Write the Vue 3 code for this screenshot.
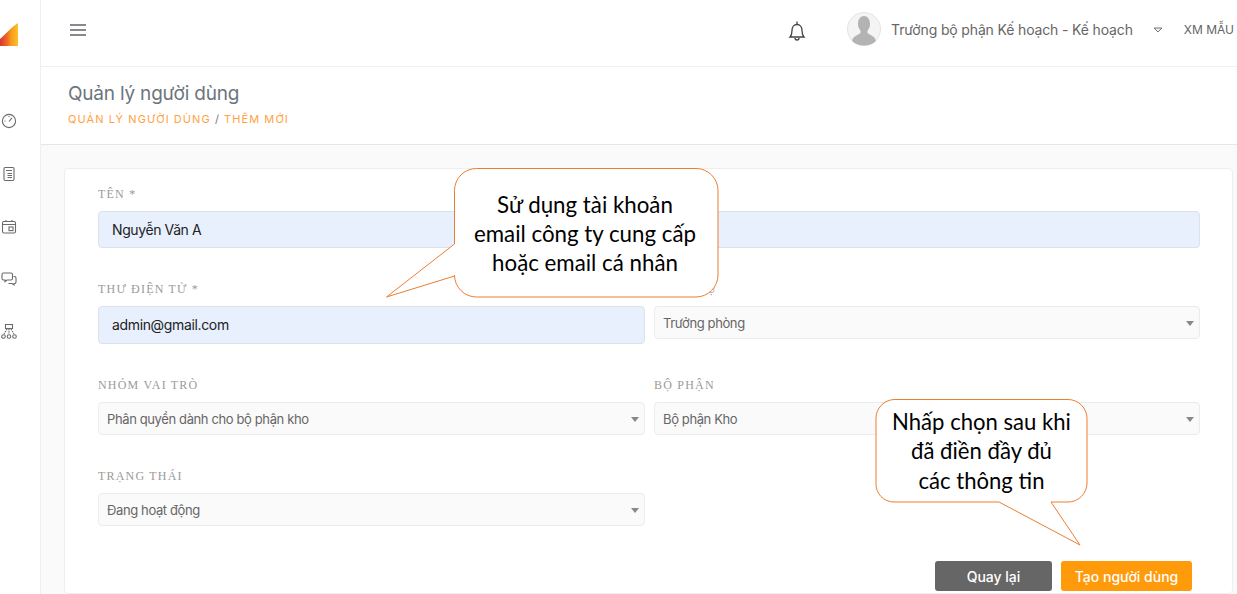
<script setup>
const navIcons = ['gauge', 'doc', 'cal', 'chat', 'tree']
</script>

<template>
  <div class="app">
    <aside class="sidebar">
      <svg class="logo" width="18" height="24" viewBox="0 0 18 24">
        <defs>
          <linearGradient id="logo-fill" x1="0" y1="0" x2="1" y2="0">
            <stop offset="0" stop-color="#d9352f" />
            <stop offset="0.4" stop-color="#ee6a26" />
            <stop offset="0.62" stop-color="#f99b1c" />
            <stop offset="1" stop-color="#fcc02c" />
          </linearGradient>
        </defs>
        <path d="M0 23 V16 C4 13 9 6 18 0 V23Z" fill="url(#logo-fill)" />
      </svg>
      <nav class="nav">
        <svg v-for="n in navIcons" :key="n" width="16" height="16" viewBox="0 0 16 16" fill="none" stroke="#6b6b6b" stroke-width="1.1">
          <template v-if="n === 'gauge'">
            <circle cx="8" cy="8" r="6.6" />
            <path d="M8 8.5 L11 4.8 M3.5 8h1M8 3v1" />
          </template>
          <template v-else-if="n === 'doc'">
            <rect x="3" y="1.500" width="10" height="13" rx="1.2" />
            <path d="M5 4.500h6M6.500 7.500h4.500M6.500 9.500h4.500M6.500 11.500h4.500" />
          </template>
          <template v-else-if="n === 'cal'">
            <rect x="1.5" y="2.5" width="13" height="11.5" rx="1.4" />
            <path d="M1.5 5.5h13M5 1v2M11 1v2" />
            <rect x="8" y="8" width="4" height="3.6" />
          </template>
          <template v-else-if="n === 'chat'">
            <path d="M2.5 2h7.500a1.500 1.500 0 0 1 1.500 1.500v4a1.500 1.500 0 0 1-1.500 1.500H6l-2 1.600V9H2.500A1.500 1.500 0 0 1 1 7.500v-4A1.500 1.500 0 0 1 2.500 2Z" />
            <path d="M12.500 5.500h1a1.500 1.500 0 0 1 1.500 1.500v4a1.500 1.500 0 0 1-1.500 1.500H13v1.500l-2-1.500H7.500" />
          </template>
          <template v-else>
            <rect x="4.500" y="0.500" width="7" height="4" />
            <path d="M8 5v5M6 5L3 10M10 5l3 5" stroke-dasharray="1.500 0.800" />
            <circle cx="2.500" cy="12.500" r="1.800" />
            <circle cx="8" cy="12.500" r="1.800" />
            <circle cx="13.500" cy="12.500" r="1.800" />
          </template>
        </svg>
      </nav>
    </aside>

    <main class="main">
      <header class="topbar">
        <svg class="menu" width="16" height="12" viewBox="0 0 16 12" stroke="#5f6368" stroke-width="1.600">
          <path d="M0 1h16M0 6h16M0 11h16" />
        </svg>
        <svg class="bell" width="18" height="22" viewBox="0 0 18 22" fill="none" stroke="#444" stroke-width="1.300">
          <path d="M2 17c1.500-1.500 2-3 2-6.500C4 7 6 4.500 9 4.500s5 2.500 5 6C14 14 14.500 15.500 16 17Z" />
          <path d="M9 1.500v3M7 18c0 1.300 1 2 2 2s2-.7 2-2" />
        </svg>
        <svg class="avatar" width="34" height="34" viewBox="0 0 34 34">
          <circle cx="17" cy="17" r="16.500" fill="#f4f4f4" stroke="#e4e4e4" />
          <path d="M5 29c1-5 6-6 8-7.500 1-1 .6-2.500 0-3.500-1.500-2-2-4-2-6C11 7 13.500 4 17 4s6 3 6 8c0 2-.5 4-2 6-.6 1-1 2.500 0 3.500 2 1.500 7 2.500 8 7.500-3 3-7.500 4.500-12 4.500S8 32 5 29Z" fill="#b3b3b3" />
        </svg>
        <span class="user">Trưởng bộ phận Kế hoạch - Kế hoạch</span>
        <svg class="drop" width="10" height="6" viewBox="0 0 10 6" fill="#eee" stroke="#777">
          <path d="M1 1h8L5 5Z" />
        </svg>
        <span class="org">XM MẪU</span>
      </header>

      <section class="page-head">
        <h1>Quản lý người dùng</h1>
        <p class="crumb">QUẢN LÝ NGƯỜI DÙNG <i>/</i> THÊM MỚI</p>
      </section>

      <div class="content">
        <form class="card" @submit.prevent>
          <div class="grid">
            <div class="field wide">
              <label>Tên *</label>
              <div class="input name">Nguyễn Văn A</div>
            </div>
            <div class="field">
              <label>Thư điện tử *</label>
              <div class="input email">admin@gmail.com</div>
            </div>
            <div class="field">
              <label>Chức vụ</label>
              <div class="select offset">Trưởng phòng</div>
            </div>
            <div class="field">
              <label>Nhóm vai trò</label>
              <div class="select">Phân quyền dành cho bộ phận kho</div>
            </div>
            <div class="field">
              <label>Bộ phận</label>
              <div class="select">Bộ phận Kho</div>
            </div>
            <div class="field">
              <label>Trạng thái</label>
              <div class="select">Đang hoạt động</div>
            </div>
          </div>
          <div class="actions">
            <button type="button" class="btn back">Quay lại</button>
            <button type="submit" class="btn create">Tạo người dùng</button>
          </div>
        </form>
      </div>
    </main>

    <!-- chú thích nằm đè lên ảnh chụp -->
    <div class="callout one">
      <svg width="334" height="131" viewBox="0 0 334 131">
        <path d="M91.500 .5 H311 a22 22 0 0 1 22 22 V107 a22 22 0 0 1-22 22 H91.500 a22 22 0 0 1-22-22 V108 L1.500 129 L69.500 76 V22.500 a22 22 0 0 1 22-22Z" fill="#fff" stroke="#ed7d31" />
      </svg>
      <p>Sử dụng tài khoản<br />email công ty cung cấp<br />hoặc email cá nhân</p>
    </div>
    <div class="callout two">
      <svg width="214" height="148" viewBox="0 0 214 148">
        <path d="M19 .5 H193 a19 19 0 0 1 19 19 V84 a19 19 0 0 1-19 19 H176 L205 146 L124 103 H19 a18 18 0 0 1-18-19 V19.500 a19 19 0 0 1 18-19Z" fill="#fff" stroke="#ed7d31" />
      </svg>
      <p>Nhấp chọn sau khi<br />đã điền đầy đủ<br />các thông tin</p>
    </div>
  </div>
</template>

<style scoped>
.app {
  position: relative;
  display: flex;
  width: 1237px;
  height: 594px;
  overflow: hidden;
  background: #fff;
  font-family: Inter, Roboto, "Noto Sans", sans-serif;
}

.sidebar {
  flex: 0 0 41px;
  box-sizing: border-box;
  border-right: 1px solid #efefef;
  padding-top: 23px;
}

.logo {
  display: block;
}

.nav {
  display: flex;
  flex-direction: column;
  gap: 36.75px;
  margin-top: 66px;
  padding-left: 1px;
}

.main {
  flex: 1;
  display: flex;
  flex-direction: column;
  min-width: 0;
}

.topbar {
  display: flex;
  align-items: center;
  flex: 0 0 67px;
  box-sizing: border-box;
  border-bottom: 1px solid #f0f0f0;
  padding-left: 29px;
  color: #666;
  font-size: 14px;
}

.menu {
  margin-right: auto;
  margin-top: -6px;
}

.bell {
  margin-top: -4px;
  margin-right: 41px;
}

.avatar {
  margin-top: -8px;
  margin-right: 10px;
}

.user {
  margin-top: -8px;
  letter-spacing: -0.15px;
  white-space: nowrap;
}

.drop {
  margin: -7px 0 0 20px;
}

.org {
  margin: -8px 3px 0 21px;
  font-size: 12px;
  white-space: nowrap;
}

.page-head {
  flex: 0 0 78px;
  box-sizing: border-box;
  border-bottom: 1px solid #e6e6e6;
  padding: 16px 0 0 27px;
}

h1 {
  margin: 0;
  font-size: 19px;
  font-weight: 400;
  line-height: 22px;
  color: #6c757d;
  letter-spacing: -0.2px;
}

.crumb {
  margin: 7px 0 0;
  font-size: 11px;
  line-height: 14px;
  letter-spacing: 1.07px;
  color: #ffa23f;
}

.crumb i {
  font-style: normal;
  color: #777;
}

.content {
  flex: 1;
  background: #fafafa;
  padding: 23px 4px 0 23px;
}

.card {
  box-sizing: border-box;
  height: 426px;
  background: #fff;
  border: 1px solid #eee;
  border-radius: 4px;
  padding: 18px 32px 0 33px;
}

.grid {
  display: grid;
  grid-template-columns: 547px 546px;
  column-gap: 9px;
  row-gap: 34px;
}

.field.wide {
  grid-column: 1 / -1;
}

label {
  display: block;
  height: 15px;
  margin-bottom: 9px;
  font-family: "Liberation Serif", serif;
  font-size: 12px;
  line-height: 15px;
  letter-spacing: 1.2px;
  text-transform: uppercase;
  color: #9a9a9a;
}

.input {
  box-sizing: border-box;
  display: flex;
  align-items: center;
  height: 38px;
  background: #e8f0fe;
  border: 1px solid #dbe2ec;
  border-radius: 4px;
  padding: 0 0 1px 13px;
  font-size: 14px;
  letter-spacing: -0.35px;
  color: #222;
}

.name {
  height: 37px;
  letter-spacing: -0.4px;
}

.select {
  position: relative;
  box-sizing: border-box;
  display: flex;
  align-items: center;
  height: 33px;
  background: #fafafa;
  border: 1px solid #ececec;
  border-radius: 4px;
  padding-left: 8px;
  font-size: 13px;
  letter-spacing: -0.38px;
  color: #666;
}

.select::after {
  content: "";
  position: absolute;
  right: 5px;
  top: 14px;
  border-left: 4px solid transparent;
  border-right: 4px solid transparent;
  border-top: 5px solid #888;
}

.offset {
  margin-top: 1px;
}

.actions {
  display: flex;
  justify-content: flex-end;
  gap: 9px;
  margin-top: 35px;
  padding-right: 8px;
}

.btn {
  height: 30px;
  border: 0;
  border-radius: 3px;
  color: #fff;
  font-family: inherit;
  font-size: 14px;
  font-weight: 500;
  letter-spacing: 0;
}

.back {
  width: 117px;
  background: #666;
}

.create {
  width: 131px;
  background: #ff9a0a;
}

.callout {
  position: absolute;
}

.callout svg {
  display: block;
}

.callout p {
  position: absolute;
  margin: 0;
  font-family: Lato, "Noto Sans", sans-serif;
  color: #000;
  text-align: center;
  white-space: nowrap;
}

.one {
  left: 385px;
  top: 168px;
}

.one p {
  left: 68.500px;
  width: 263px;
  top: 21.600px;
  font-size: 22.3px;
  line-height: 29px;
}

.two {
  left: 875px;
  top: 399px;
}

.two p {
  left: 1px;
  width: 211px;
  top: 7.600px;
  font-size: 22.1px;
  line-height: 29.500px;
}
</style>

<style>
body {
  margin: 0;
  overflow: hidden;
}
</style>
